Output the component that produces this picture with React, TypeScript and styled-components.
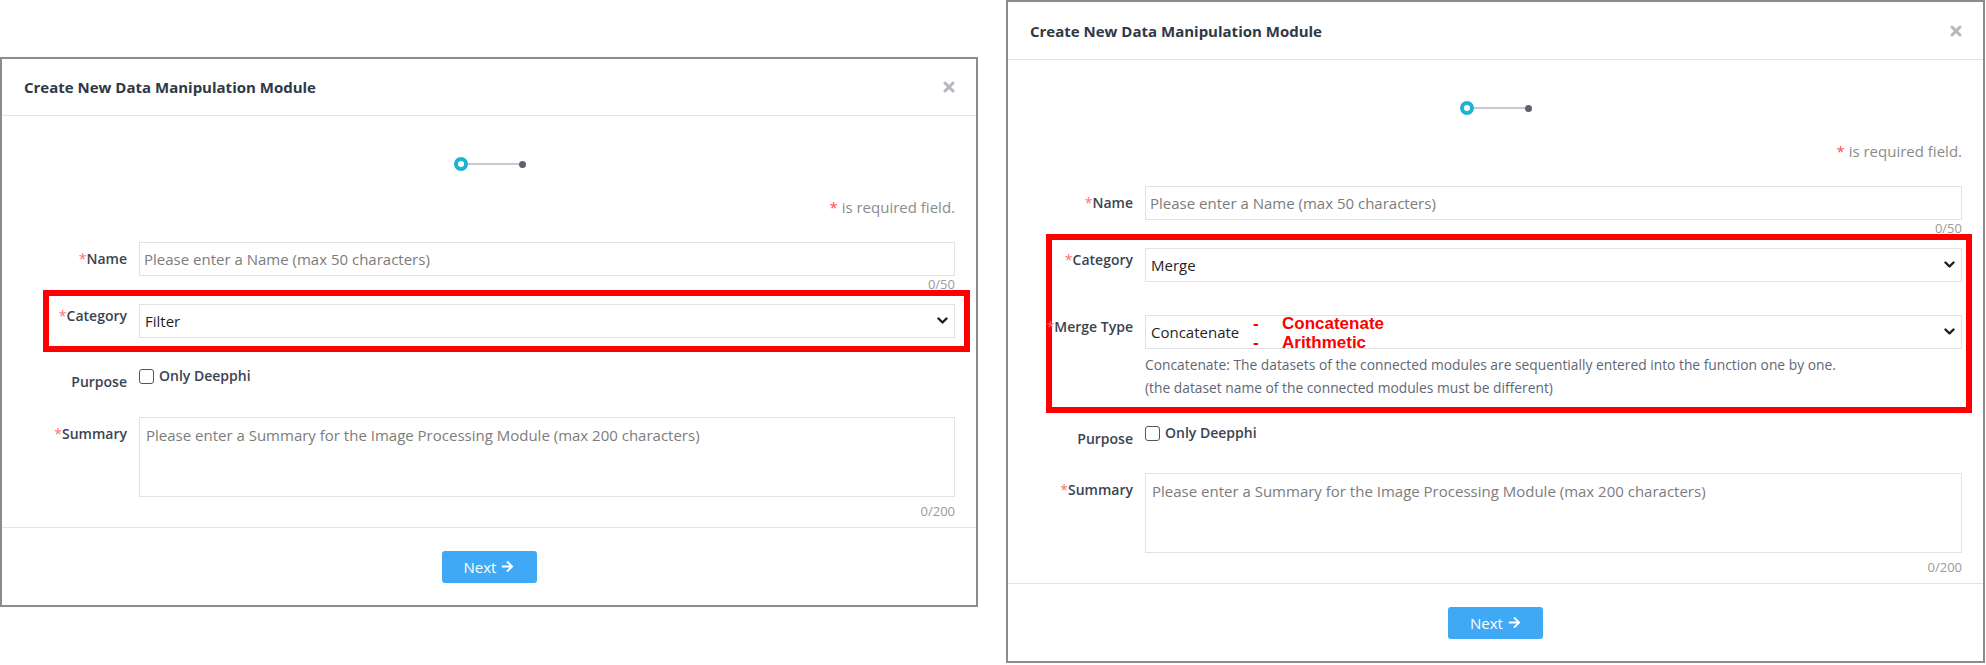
import React from 'react';
import styled, { createGlobalStyle } from 'styled-components';
import { FaArrowRight } from 'react-icons/fa';

const GlobalStyle = createGlobalStyle`
  html, body {
    margin: 0;
    padding: 0;
    background: #ffffff;
  }
  body {
    font-family: 'Open Sans', 'Noto Sans', sans-serif;
    color: #333;
  }
  * {
    box-sizing: border-box;
  }
`;

type Variant = 'filter' | 'merge';

const ModuleModal = ({ variant, width, top, headerH }: { variant: Variant; width: number; top: number; headerH: number }) => {
  const isMerge = variant === 'merge';

  return (
    <Modal $width={width} $top={top}>
      <Header $h={headerH}>
        <Title>Create New Data Manipulation Module</Title>
        <CloseButton aria-label='close'>
          <svg width='12' height='12' viewBox='0 0 12 12'>
            <path d='M2 2 L10 10 M10 2 L2 10' stroke='#b3b7bf' strokeWidth='3' strokeLinecap='round' />
          </svg>
        </CloseButton>
      </Header>

      <Body>
        <Stepper>
          <StepCurrent />
          <StepLine />
          <StepNext />
        </Stepper>

        <RequiredNote>
          <Star>*</Star> is required field.
        </RequiredNote>

        <Form>
          <Row $mb={13}>
            <Label $pt={8}><Req>*</Req>Name</Label>
            <Field>
              <TextInput placeholder='Please enter a Name (max 50 characters)' />
              <Counter $gap={1}>0/50</Counter>
            </Field>
          </Row>

          <Highlight $mb={isMerge ? 25 : 29} $l={isMerge ? 16 : 19} $r={isMerge ? -10 : -15}>
            <Row $mb={isMerge ? 33 : 0}>
              <Label $pt={3}><Req>*</Req>Category</Label>
              <Field>
                <SelectWrap>
                  <Select defaultValue={isMerge ? 'merge' : 'filter'}>
                    <option value='filter'>Filter</option>
                    <option value='merge'>Merge</option>
                  </Select>
                  <Chevron />
                </SelectWrap>
              </Field>
            </Row>

            {isMerge && (
              <Row $mb={0}>
                <Label $pt={3}><Req>*</Req>Merge Type</Label>
                <Field>
                  <SelectWrap>
                    <Select defaultValue='concatenate'>
                      <option value='concatenate'>Concatenate</option>
                      <option value='arithmetic'>Arithmetic</option>
                    </Select>
                    <Chevron />
                    <Annotation>
                      <AnnotationItem><Dash>-</Dash>Concatenate</AnnotationItem>
                      <AnnotationItem><Dash>-</Dash>Arithmetic</AnnotationItem>
                    </Annotation>
                  </SelectWrap>
                  <Hint>
                    Concatenate: The datasets of the connected modules are sequentially entered into the function one by one.
                    <br />
                    (the dataset name of the connected modules must be different)
                  </Hint>
                </Field>
              </Row>
            )}
          </Highlight>

          <Row $mb={isMerge ? 25 : 26}>
            <Label $pt={6}>Purpose</Label>
            <Field>
              <CheckLabel>
                <Checkbox type='checkbox' />
                Only Deepphi
              </CheckLabel>
            </Field>
          </Row>

          <Row $mb={0}>
            <Label $pt={8}><Req>*</Req>Summary</Label>
            <Field>
              <TextArea placeholder='Please enter a Summary for the Image Processing Module (max 200 characters)' />
              <Counter $gap={7}>0/200</Counter>
            </Field>
          </Row>
        </Form>
      </Body>

      <Footer>
        <NextButton>
          Next <FaArrowRight size={13} />
        </NextButton>
      </Footer>
    </Modal>
  );
};

const Chevron = () => (
  <ChevronIcon width='11' height='8' viewBox='0 0 11 8'>
    <path d='M1.5 1.5 L5.5 5.5 L9.5 1.5' fill='none' stroke='#1e1e1e' strokeWidth='2.4' strokeLinecap='round' strokeLinejoin='round' />
  </ChevronIcon>
);

const App = () => {
  return (
    <>
      <GlobalStyle />
      <Page>
        <ModuleModal variant='filter' width={978} top={57} headerH={57} />
        <ModuleModal variant='merge' width={979} top={0} headerH={58} />
      </Page>
    </>
  );
};

export default App;

const Page = styled.div`
  width: 1986px;
  height: 665px;
  overflow: hidden;
  display: flex;
  align-items: flex-start;
  gap: 28px;
`;

const Modal = styled.section<{ $width: number; $top: number }>`
  width: ${p => p.$width}px;
  margin-top: ${p => p.$top}px;
  border: 2px solid #8c8c8c;
  background: #fff;
  display: flex;
  flex-direction: column;
`;

const Header = styled.header<{ $h: number }>`
  height: ${p => p.$h}px;
  border-bottom: 1px solid #e3e3e3;
  padding: 0 21px 0 22px;
  display: flex;
  align-items: center;
  justify-content: space-between;
`;

const Title = styled.h2`
  margin: 0;
  font-size: 15px;
  font-weight: 700;
  color: #2f3847;
`;

const CloseButton = styled.button`
  border: none;
  background: transparent;
  padding: 0;
  display: flex;
  cursor: pointer;
`;

const Body = styled.div`
  padding: 0 21px 9px 22px;
`;

const Stepper = styled.div`
  margin-top: 41px;
  height: 14px;
  display: flex;
  align-items: center;
  justify-content: center;
`;

const StepCurrent = styled.span`
  width: 14px;
  height: 14px;
  border-radius: 50%;
  border: 4px solid #1db4d3;
  background: #fff;
`;

const StepLine = styled.span`
  width: 51px;
  height: 2px;
  background: #c6c9d1;
`;

const StepNext = styled.span`
  width: 7px;
  height: 7px;
  border-radius: 50%;
  background: #5b6371;
`;

const RequiredNote = styled.div`
  margin-top: 27px;
  text-align: right;
  font-size: 15px;
  line-height: 18px;
  color: #8b8b8b;
`;

const Star = styled.span`
  color: #ff4d4d;
`;

const Form = styled.div`
  margin-top: 26px;
`;

const Row = styled.div<{ $mb: number }>`
  display: flex;
  align-items: flex-start;
  gap: 12px;
  margin-bottom: ${p => p.$mb}px;
`;

const Label = styled.label<{ $pt: number }>`
  position: relative;
  z-index: 2;
  flex: 0 0 103px;
  padding-top: ${p => p.$pt}px;
  text-align: right;
  white-space: nowrap;
  font-size: 14px;
  font-weight: 600;
  line-height: 18px;
  color: #3b4352;
`;

const Req = styled.span`
  color: #ff6f6f;
  font-weight: 400;
`;

const Field = styled.div`
  flex: 1;
  min-width: 0;
  display: flex;
  flex-direction: column;
`;

const TextInput = styled.input`
  height: 34px;
  border: 1px solid #e2e2e2;
  padding: 0 4px;
  font: inherit;
  font-size: 15px;
  color: #333;
  outline: none;

  &::placeholder {
    color: #7c7c7c;
  }
`;

const Counter = styled.div<{ $gap: number }>`
  margin-top: ${p => p.$gap}px;
  text-align: right;
  font-size: 13px;
  line-height: 14px;
  color: #9a9a9a;
`;

const Highlight = styled.div<{ $mb: number; $l: number; $r: number }>`
  position: relative;
  margin-bottom: ${p => p.$mb}px;

  &::after {
    content: '';
    position: absolute;
    z-index: 1;
    top: -14px;
    bottom: -14px;
    left: ${p => p.$l}px;
    right: ${p => p.$r}px;
    border: 6px solid #ff0000;
    pointer-events: none;
  }
`;

const SelectWrap = styled.div`
  position: relative;
  height: 34px;
`;

const Select = styled.select`
  width: 100%;
  height: 100%;
  appearance: none;
  border: 1px solid #e2e2e2;
  border-radius: 0;
  background: #fff;
  padding: 0 30px 0 5px;
  font: inherit;
  font-size: 15px;
  color: #1f1f1f;
  outline: none;
`;

const ChevronIcon = styled.svg`
  position: absolute;
  right: 7px;
  top: 50%;
  transform: translateY(-50%);
  pointer-events: none;
`;

const Annotation = styled.div`
  position: absolute;
  left: 108px;
  top: -1px;
  font-family: 'Liberation Sans', Arial, sans-serif;
  font-size: 17px;
  font-weight: 700;
  line-height: 19px;
  color: #ff0000;
  pointer-events: none;
`;

const AnnotationItem = styled.div`
  display: flex;
`;

const Dash = styled.span`
  width: 29px;
`;

const Hint = styled.p`
  margin: 4px 0 0;
  font-size: 13.8px;
  line-height: 23px;
  color: #5f6775;
`;

const CheckLabel = styled.label`
  display: flex;
  align-items: center;
  gap: 5px;
  height: 18px;
  font-size: 14px;
  font-weight: 600;
  line-height: 18px;
  color: #3b4352;
`;

const Checkbox = styled.input`
  appearance: none;
  width: 15px;
  height: 15px;
  margin: 0;
  border: 1.5px solid #555;
  border-radius: 3px;
  background: #fff;
`;

const TextArea = styled.textarea`
  display: block;
  height: 80px;
  resize: none;
  border: 1px solid #e2e2e2;
  padding: 7px 6px;
  font: inherit;
  font-size: 15px;
  line-height: 20px;
  color: #333;
  outline: none;

  &::placeholder {
    color: #7c7c7c;
  }
`;

const Footer = styled.footer`
  height: 78px;
  border-top: 1px solid #e3e3e3;
  display: flex;
  align-items: center;
  justify-content: center;
`;

const NextButton = styled.button`
  width: 95px;
  height: 32px;
  border: none;
  border-radius: 3px;
  background: #40a9f5;
  color: #fff;
  font: inherit;
  font-size: 15px;
  display: inline-flex;
  align-items: center;
  justify-content: center;
  gap: 5px;
  cursor: pointer;
`;
